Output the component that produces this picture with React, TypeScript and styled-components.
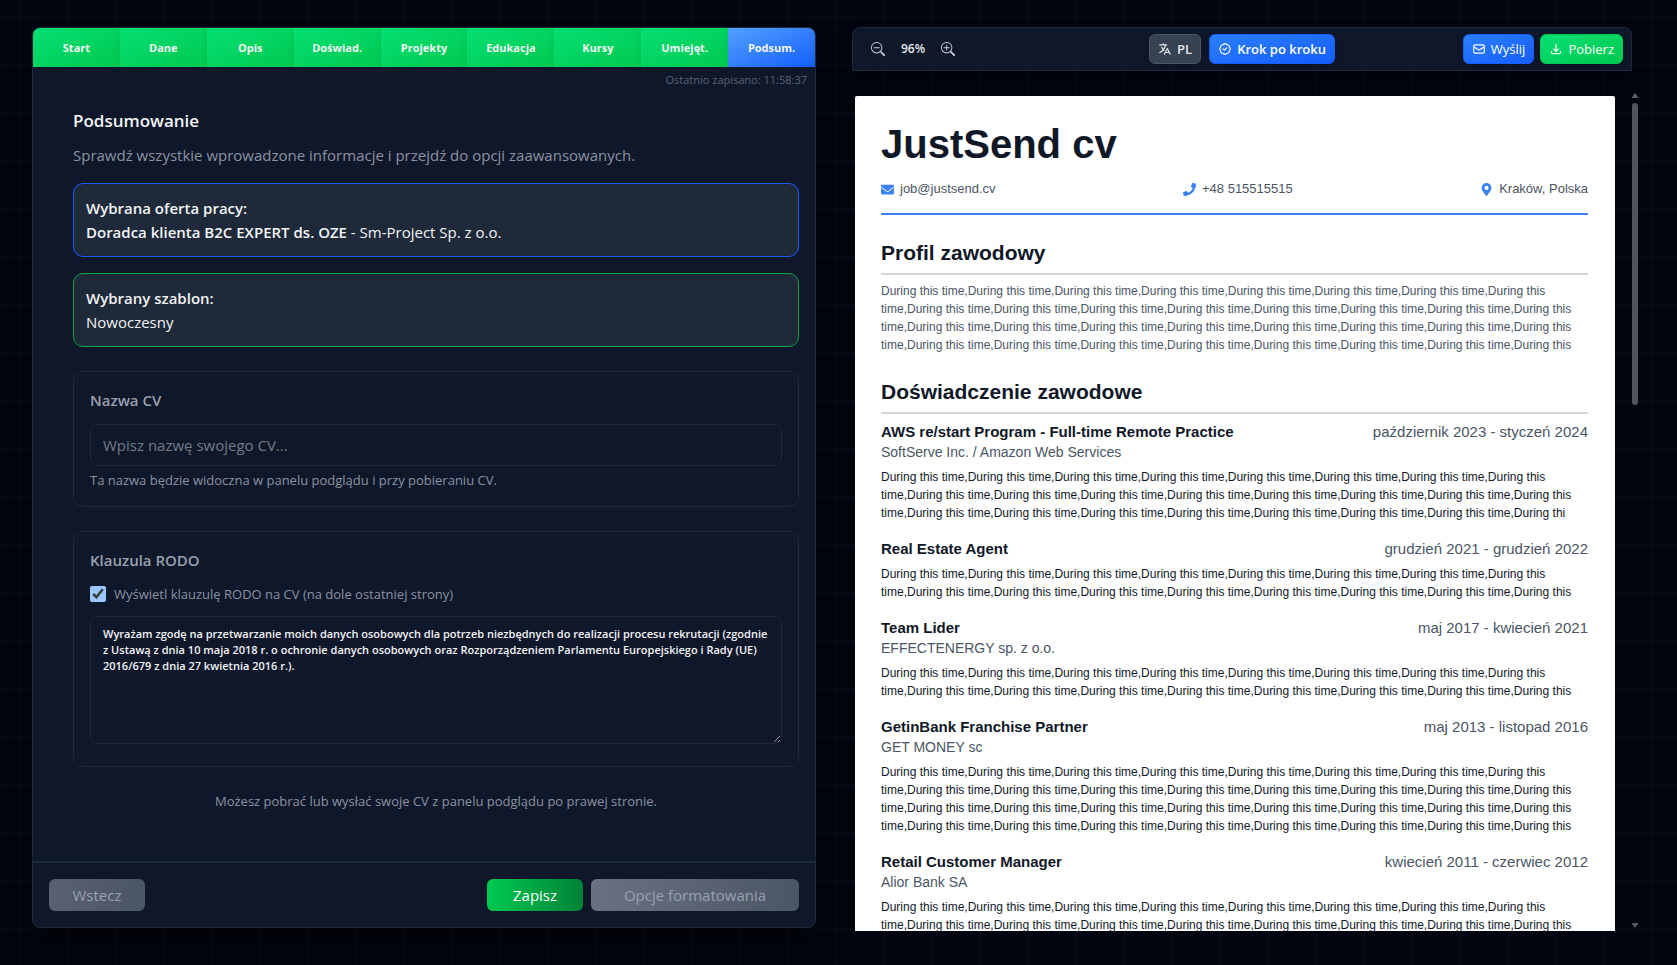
import React, { useState } from "react";
import styled, { createGlobalStyle, css } from "styled-components";
import { BsZoomIn, BsZoomOut } from "react-icons/bs";
import { FaEnvelope, FaMapMarkerAlt, FaPhone } from "react-icons/fa";
import {
  HiOutlineBadgeCheck,
  HiOutlineDownload,
  HiOutlineMail,
  HiOutlineTranslate,
} from "react-icons/hi";

const GlobalStyle = createGlobalStyle`
  *, *::before, *::after { box-sizing: border-box; }
  html { color-scheme: dark; }
  body {
    margin: 0;
    background-color: #020510;
    background-image:
      linear-gradient(to right, rgba(255, 255, 255, 0.03) 1px, transparent 1px),
      linear-gradient(to bottom, rgba(255, 255, 255, 0.03) 1px, transparent 1px);
    background-size: 48px 48px;
    background-position: 20px 17px;
    color: #f3f4f6;
    font-family: "Segoe UI", "Open Sans", "Noto Sans", sans-serif;
    font-size: 15px;
    line-height: 24px;
  }
  button, input, textarea { font: inherit; }
  h1, h2, h3, p { margin: 0; }
`;

const Page = styled.main`
  display: grid;
  grid-template-columns: minmax(0, 784fr) minmax(0, 793fr);
  gap: 36px;
  height: 100vh;
  min-height: 640px;
  padding: 27px 32px 34px;
`;

/* ---------- editor ---------- */

const Editor = styled.section`
  display: flex;
  flex-direction: column;
  min-height: 0;
  margin-bottom: 3px;
  overflow: hidden;
  background: #0f172a;
  border: 1px solid #1e2939;
  border-radius: 8px;
  box-shadow: 0 20px 25px -5px rgba(0, 0, 0, 0.5);
`;

const Steps = styled.nav`
  display: flex;
  flex: none;
`;

const Step = styled.button<{ $current?: boolean }>`
  flex: 1 1 0;
  min-width: 0;
  height: 39px;
  padding: 0;
  border: 0;
  color: #f3f4f6;
  font-size: 11px;
  line-height: 16px;
  font-weight: 700;
  cursor: pointer;
  background: ${(p) =>
    p.$current
      ? "linear-gradient(to bottom right, #51a2ff, #155dfc)"
      : "linear-gradient(to bottom right, #05df72, #00c950)"};
  box-shadow: ${(p) => (p.$current ? "none" : "inset -6px 0 6px -5px rgba(0, 0, 0, 0.06)")};
`;

const SavedAt = styled.p`
  padding: 5px 8px 0;
  color: #5b6475;
  font-size: 11px;
  line-height: 16px;
  text-align: right;
`;

const EditorBody = styled.div`
  flex: 1;
  min-height: 0;
  overflow-y: auto;
  scrollbar-width: none;
  padding: 19px 16px 0 40px;
`;

const Title = styled.h2`
  font-size: 17px;
  line-height: 28px;
  font-weight: 600;
`;

const Lead = styled.p`
  margin-top: 8px;
  color: #8b93a3;
`;

const Notice = styled.div<{ $color: string }>`
  margin-top: 16px;
  padding: 12px;
  background: #1e2939;
  border: 1px solid ${(p) => p.$color};
  border-radius: 10px;
`;

const Strong = styled.strong`
  font-weight: 600;
`;

const Card = styled.section<{ $bottom?: number }>`
  margin-top: 24px;
  padding: 16px 16px ${(p) => p.$bottom ?? 16}px;
  border: 1px solid #1e2939;
  border-radius: 10px;
`;

const CardLabel = styled.label`
  display: block;
  margin-bottom: 12px;
  color: #99a1af;
  font-weight: 600;
`;

const fieldStyle = css`
  display: block;
  width: 100%;
  color: #f3f4f6;
  background: #0f172a;
  border: 1px solid #1e2939;
  border-radius: 8px;
`;

const TextField = styled.input`
  ${fieldStyle}
  height: 42px;
  padding: 8px 12px;
  &::placeholder { color: #757b87; }
`;

const TextArea = styled.textarea`
  ${fieldStyle}
  height: 128px;
  padding: 9px 12px;
  font-size: 11px;
  line-height: 16px;
  font-weight: 600;
  resize: vertical;
`;

const Helper = styled.p`
  margin-top: 4px;
  color: #8b93a3;
  font-size: 13px;
  line-height: 20px;
`;

const CheckLabel = styled.label`
  display: flex;
  align-items: center;
  gap: 8px;
  margin: 10px 0 12px;
  color: #8b93a3;
  font-size: 13px;
  line-height: 20px;
`;

const Check = styled.input`
  width: 16px;
  height: 16px;
  margin: 0;
`;

const Hint = styled.p`
  margin-top: 24px;
  color: #8b93a3;
  font-size: 13px;
  line-height: 20px;
  text-align: center;
`;

const EditorFooter = styled.footer`
  display: flex;
  flex: none;
  gap: 8px;
  padding: 16px;
  border-top: 2px solid #1e2939;
`;

const FooterButton = styled.button<{ $primary?: boolean; $wide?: boolean }>`
  height: 32px;
  width: ${(p) => (p.$wide ? "208px" : "96px")};
  padding: 0;
  border: 0;
  border-radius: 6px;
  color: ${(p) => (p.$primary ? "#ffffff" : "#99a1af")};
  background: ${(p) =>
    p.$primary
      ? "linear-gradient(to right, #00c950, #008236)"
      : "linear-gradient(to right, #6a7282, #4a5565)"};
  &:first-child {
    margin-right: auto;
    background: linear-gradient(to right, #596171, #4a5565);
  }
`;

/* ---------- preview ---------- */

const Preview = styled.section`
  display: flex;
  flex-direction: column;
  min-width: 0;
  min-height: 0;
`;

const Toolbar = styled.div`
  display: grid;
  grid-template-columns: 1fr auto 1fr;
  align-items: center;
  flex: none;
  margin-right: 13px;
  height: 44px;
  padding: 0 8px;
  background: #0f172a;
  border: 1px solid #1e2939;
  border-radius: 8px 8px 0 0;
  box-shadow: 0 10px 15px -3px rgba(0, 0, 0, 0.5);
`;

const ToolGroup = styled.div<{ $gap?: number; $align?: string; $inset?: number }>`
  display: flex;
  align-items: center;
  justify-content: ${(p) => p.$align ?? "flex-start"};
  gap: ${(p) => p.$gap ?? 0}px;
  padding-left: ${(p) => p.$inset ?? 0}px;
`;

const ZoomButton = styled.button`
  display: flex;
  padding: 8px;
  border: 0;
  background: none;
  color: #d1d5dc;
  svg { width: 14px; height: 14px; }
`;

const ZoomValue = styled.span`
  width: 40px;
  color: #e5e7eb;
  font-size: 12px;
  font-weight: 600;
  text-align: center;
`;

const tones = {
  gray: ["#364153", "#4a5565"],
  blue: ["linear-gradient(to bottom right, #2b7fff, #155dfc)", "#155dfc"],
  green: ["linear-gradient(to bottom right, #05df72, #00c950)", "#00c950"],
};

const ToolButton = styled.button<{ $tone: keyof typeof tones; $bold?: boolean }>`
  display: flex;
  align-items: center;
  gap: 5px;
  height: 30px;
  padding: 0 8px;
  color: ${(p) => (p.$tone === "gray" ? "#e5e7eb" : "#ffffff")};
  font-size: 13px;
  line-height: 20px;
  font-weight: ${(p) => (p.$bold ? 600 : 500)};
  white-space: nowrap;
  background: ${(p) => tones[p.$tone][0]};
  border: 1px solid ${(p) => tones[p.$tone][1]};
  border-radius: 6px;
  box-shadow: 0 2px 4px rgba(0, 0, 0, 0.3);
  svg { width: 14px; height: 14px; }
`;

const Viewport = styled.div`
  display: flex;
  flex: 1;
  min-height: 0;
  margin-top: 22px;
`;

const SheetScroll = styled.div`
  flex: 1;
  min-width: 0;
  margin-right: 17px;
  padding: 3px 0 0 3px;
  overflow-y: auto;
  scrollbar-width: none;
`;

const Rail = styled.div`
  display: flex;
  flex-direction: column;
  align-items: center;
  width: 6px;
  margin-right: 7px;
`;

const RailArrow = styled.svg`
  flex: none;
  width: 6px;
  height: 5px;
  margin-bottom: 3px;
  fill: #565b66;
`;

const RailTrack = styled.div`
  flex: 1;
  width: 100%;
  margin: 2px 0 3px;
`;

const RailThumb = styled.div`
  height: 37%;
  background: #51545e;
  border-radius: 3px;
`;

const Sheet = styled.article`
  padding: 26px 27px 40px 26px;
  color: #101828;
  background: #ffffff;
  border-radius: 2px;
  font-family: Arial, "Liberation Sans", sans-serif;
`;

const Name = styled.h1`
  font-size: 40px;
  line-height: 44px;
  font-weight: 700;
`;

const Contacts = styled.address`
  display: flex;
  justify-content: space-between;
  margin-top: 13px;
  padding-bottom: 14px;
  color: #4a5565;
  font-size: 13px;
  line-height: 20px;
  font-style: normal;
  border-bottom: 2px solid #3b82f6;
`;

const Contact = styled.span`
  display: flex;
  align-items: center;
  gap: 6px;
  svg { color: #3b82f6; }
`;

const Heading = styled.h2`
  margin: 25px 0 7px;
  padding: 1px 0 8px;
  font-size: 21px;
  line-height: 24px;
  font-weight: 700;
  border-bottom: 2px solid #d1d5dc;
`;

const Paragraph = styled.p<{ $muted?: boolean }>`
  color: ${(p) => (p.$muted ? "#4a5565" : "#101828")};
  font-size: 12px;
  line-height: 18px;
`;

const JobList = styled.div`
  display: grid;
  gap: 17px;
  padding-top: 1px;
`;

const Job = styled.div`
  ${Paragraph} { margin-top: 6px; }
`;

const JobHead = styled.div`
  display: flex;
  justify-content: space-between;
  font-size: 15px;
  line-height: 20px;
`;

const JobTitle = styled.h3`
  font-size: 15px;
  line-height: 20px;
  font-weight: 700;
`;

const Muted = styled.span`
  color: #4a5565;
`;

const Company = styled.p`
  color: #4a5565;
  font-size: 14px;
  line-height: 20px;
`;

const steps = ["Start", "Dane", "Opis", "Doświad.", "Projekty", "Edukacja", "Kursy", "Umiejęt.", "Podsum."];

const filler = (lines: number, ending = "During this") => "During this time,".repeat(lines * 8 - 1) + ending;

const jobs = [
  {
    title: "AWS re/start Program - Full-time Remote Practice",
    dates: "październik 2023 - styczeń 2024",
    company: "SoftServe Inc. / Amazon Web Services",
    text: filler(3, "During thi"),
  },
  { title: "Real Estate Agent", dates: "grudzień 2021 - grudzień 2022", text: filler(2) },
  { title: "Team Lider", dates: "maj 2017 - kwiecień 2021", company: "EFFECTENERGY sp. z o.o.", text: filler(2) },
  { title: "GetinBank Franchise Partner", dates: "maj 2013 - listopad 2016", company: "GET MONEY sc", text: filler(4) },
  { title: "Retail Customer Manager", dates: "kwiecień 2011 - czerwiec 2012", company: "Alior Bank SA", text: filler(4) },
];

const clause =
  "Wyrażam zgodę na przetwarzanie moich danych osobowych dla potrzeb niezbędnych do realizacji procesu rekrutacji (zgodnie z Ustawą z dnia 10 maja 2018 r. o ochronie danych osobowych oraz Rozporządzeniem Parlamentu Europejskiego i Rady (UE) 2016/679 z dnia 27 kwietnia 2016 r.).";

export default function App() {
  const [cvName, setCvName] = useState("");
  const [showClause, setShowClause] = useState(true);
  const [clauseText, setClauseText] = useState(clause);

  return (
    <>
      <GlobalStyle />
      <Page>
        <Editor>
          <Steps>
            {steps.map((step, i) => (
              <Step key={step} type="button" $current={i === steps.length - 1}>
                {step}
              </Step>
            ))}
          </Steps>
          <SavedAt>Ostatnio zapisano: 11:58:37</SavedAt>
          <EditorBody>
            <Title>Podsumowanie</Title>
            <Lead>Sprawdź wszystkie wprowadzone informacje i przejdź do opcji zaawansowanych.</Lead>
            <Notice $color="#155dfc">
              <p><Strong>Wybrana oferta pracy:</Strong></p>
              <p><Strong>Doradca klienta B2C EXPERT ds. OZE</Strong> - Sm-Project Sp. z o.o.</p>
            </Notice>
            <Notice $color="#00a63e">
              <p><Strong>Wybrany szablon:</Strong></p>
              <p>Nowoczesny</p>
            </Notice>
            <Card>
              <CardLabel htmlFor="cv-name">Nazwa CV</CardLabel>
              <TextField
                id="cv-name"
                placeholder="Wpisz nazwę swojego CV..."
                value={cvName}
                onChange={(e) => setCvName(e.target.value)}
              />
              <Helper>Ta nazwa będzie widoczna w panelu podglądu i przy pobieraniu CV.</Helper>
            </Card>
            <Card $bottom={22}>
              <CardLabel htmlFor="clause">Klauzula RODO</CardLabel>
              <CheckLabel>
                <Check
                  type="checkbox"
                  checked={showClause}
                  onChange={(e) => setShowClause(e.target.checked)}
                />
                Wyświetl klauzulę RODO na CV (na dole ostatniej strony)
              </CheckLabel>
              <TextArea id="clause" value={clauseText} onChange={(e) => setClauseText(e.target.value)} />
            </Card>
            <Hint>Możesz pobrać lub wysłać swoje CV z panelu podglądu po prawej stronie.</Hint>
          </EditorBody>
          <EditorFooter>
            <FooterButton type="button">Wstecz</FooterButton>
            <FooterButton type="button" $primary>Zapisz</FooterButton>
            <FooterButton type="button" $wide>Opcje formatowania</FooterButton>
          </EditorFooter>
        </Editor>

        <Preview>
          <Toolbar>
            <ToolGroup $inset={2}>
              <ZoomButton type="button" aria-label="Pomniejsz"><BsZoomOut /></ZoomButton>
              <ZoomValue>96%</ZoomValue>
              <ZoomButton type="button" aria-label="Powiększ"><BsZoomIn /></ZoomButton>
            </ToolGroup>
            <ToolGroup $gap={8}>
              <ToolButton type="button" $tone="gray" $bold><HiOutlineTranslate />PL</ToolButton>
              <ToolButton type="button" $tone="blue" $bold><HiOutlineBadgeCheck />Krok po kroku</ToolButton>
            </ToolGroup>
            <ToolGroup $gap={6} $align="flex-end">
              <ToolButton type="button" $tone="blue"><HiOutlineMail />Wyślij</ToolButton>
              <ToolButton type="button" $tone="green"><HiOutlineDownload />Pobierz</ToolButton>
            </ToolGroup>
          </Toolbar>
          <Viewport>
            <SheetScroll>
              <Sheet>
                <Name>JustSend cv</Name>
                <Contacts>
                  <Contact><FaEnvelope />job@justsend.cv</Contact>
                  <Contact><FaPhone />+48 515515515</Contact>
                  <Contact><FaMapMarkerAlt />Kraków, Polska</Contact>
                </Contacts>
                <Heading>Profil zawodowy</Heading>
                <Paragraph $muted>{filler(4)}</Paragraph>
                <Heading>Doświadczenie zawodowe</Heading>
                <JobList>
                  {jobs.map((job) => (
                    <Job key={job.title}>
                      <JobHead>
                        <JobTitle>{job.title}</JobTitle>
                        <Muted>{job.dates}</Muted>
                      </JobHead>
                      {job.company && <Company>{job.company}</Company>}
                      <Paragraph>{job.text}</Paragraph>
                    </Job>
                  ))}
                </JobList>
              </Sheet>
            </SheetScroll>
            <Rail aria-hidden="true">
              <RailArrow viewBox="0 0 6 5"><path d="M3 0 6 4V5H0V4Z" /></RailArrow>
              <RailTrack><RailThumb /></RailTrack>
              <RailArrow viewBox="0 0 6 5"><path d="M3 5 0 1V0H6V1Z" /></RailArrow>
            </Rail>
          </Viewport>
        </Preview>
      </Page>
    </>
  );
}
